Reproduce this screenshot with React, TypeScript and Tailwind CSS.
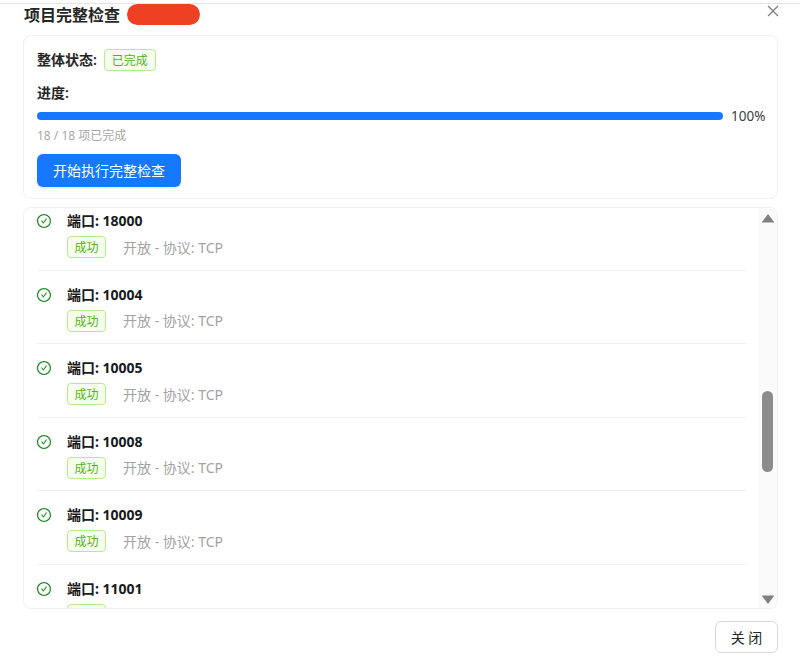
import { AiOutlineCheckCircle, AiOutlineClose } from "react-icons/ai";

const ports = ["18000", "10004", "10005", "10008", "10009", "11001"];

function PortRow({ port, last }: { port: string; last: boolean }) {
  return (
    <div className={`flex h-[73.6px] shrink-0 pt-[13px] ${last ? "" : "border-b border-[#f0f0f0]"}`}>
      <div className="flex h-[22px] w-[30px] shrink-0 items-center">
        <AiOutlineCheckCircle className="ml-[-1px] h-[16px] w-[16px] text-[#138a1c]" />
      </div>
      <div>
        <div className="h-[22px] text-[14px] leading-[22px] font-bold text-[#1a1a1a]">端口: {port}</div>
        <div className="mt-[4px] flex items-center">
          <span className="mr-[17px] flex h-[22px] w-[39px] items-center justify-center rounded-[4px] border border-[#b7eb8f] bg-[#f6ffed] pt-[2px] text-[12px] leading-[18px] text-[#52b31f]">
            成功
          </span>
          <span className="text-[14px] text-[#a3a3a3]">开放 - 协议: TCP</span>
        </div>
      </div>
    </div>
  );
}

export default function App() {
  return (
    <div className="h-[670px] w-[800px] overflow-hidden bg-white font-['Noto_Sans','Noto_Sans_CJK_SC',sans-serif]">
      <div className="mt-[3px] border-t border-[#e5e5e5] px-[22px]">
        {/* header */}
        <div className="relative flex h-[31px] items-start pl-[2px]">
          <h1 className="text-[16px] leading-[22px] font-semibold text-[#262626]">项目完整检查</h1>
          <span className="ml-[7px] h-[21px] w-[73px] rounded-full bg-[#ee4023]" />
          <AiOutlineClose className="absolute top-[-1px] right-[-3px] h-[16px] w-[16px] text-[#808080]" />
        </div>

        {/* summary card */}
        <div className="ml-[1px] h-[164px] w-[755px] rounded-[8px] border border-[#f0f0f0] px-[13px] pt-[13px]">
          <div className="flex h-[22px] items-center">
            <span className="mr-[7px] text-[14px] leading-[20px] font-semibold text-[#262626]">整体状态:</span>
            <span className="flex h-[22px] w-[52px] items-center justify-center rounded-[4px] border border-[#b7eb8f] bg-[#f6ffed] pt-[2px] text-[12px] leading-[18px] text-[#52b31f]">
              已完成
            </span>
          </div>
          <div className="mt-[11px] h-[22px] text-[14px] leading-[22px] font-semibold text-[#262626]">进度:</div>
          <div className="mt-[4px] flex h-[16px] items-center">
            <div className="h-[8px] w-[686px] shrink-0 rounded-full bg-[#1677ff]" />
            <span className="ml-[8px] text-[13.5px] text-[#404040]">100%</span>
          </div>
          <div className="mt-[2px] h-[20px] text-[12px] leading-[20px] text-[#a8a8a8]">18 / 18 项已完成</div>
          <button
            type="button"
            className="mt-[8px] h-[33px] w-[144px] rounded-[6px] bg-[#1677ff] text-[14px] text-white shadow-[0_2px_0_rgba(5,145,255,0.1)]"
          >
            开始执行完整检查
          </button>
        </div>

        {/* port list */}
        <div className="mt-[8px] ml-[1px] flex h-[402px] w-[755px] overflow-hidden rounded-[8px] border border-[#f0f0f0]">
          <div className="min-w-0 flex-1 overflow-hidden pr-[12px] pl-[13px]">
            <div className="mt-[-11px] flex flex-col">
              {ports.map((port, i) => (
                <PortRow key={port} port={port} last={i === ports.length - 1} />
              ))}
            </div>
          </div>
          <div className="relative w-[19px] shrink-0 bg-[#fafafa]">
            <svg className="absolute top-[5px] left-[3px] h-[10px] w-[14px]" viewBox="0 0 14 10">
              <path d="M7 1 L13 9 Q13.2 9.5 12.5 9.5 L1.5 9.5 Q0.8 9.5 1 9 Z" fill="#808080" />
            </svg>
            <div className="absolute top-[183px] left-[4px] h-[81px] w-[11px] rounded-full bg-[#8c8c8c]" />
            <svg className="absolute bottom-[3px] left-[3px] h-[10px] w-[14px]" viewBox="0 0 14 10">
              <path d="M1.5 0.5 L12.5 0.5 Q13.2 0.5 13 1 L7 9 L1 1 Q0.8 0.5 1.5 0.5 Z" fill="#808080" />
            </svg>
          </div>
        </div>

        {/* footer */}
        <div className="mt-[12px] flex justify-end">
          <button
            type="button"
            className="h-[32px] w-[63px] rounded-[6px] border border-[#d9d9d9] bg-white text-[14px] text-[#262626]"
          >
            关 闭
          </button>
        </div>
      </div>
    </div>
  );
}
